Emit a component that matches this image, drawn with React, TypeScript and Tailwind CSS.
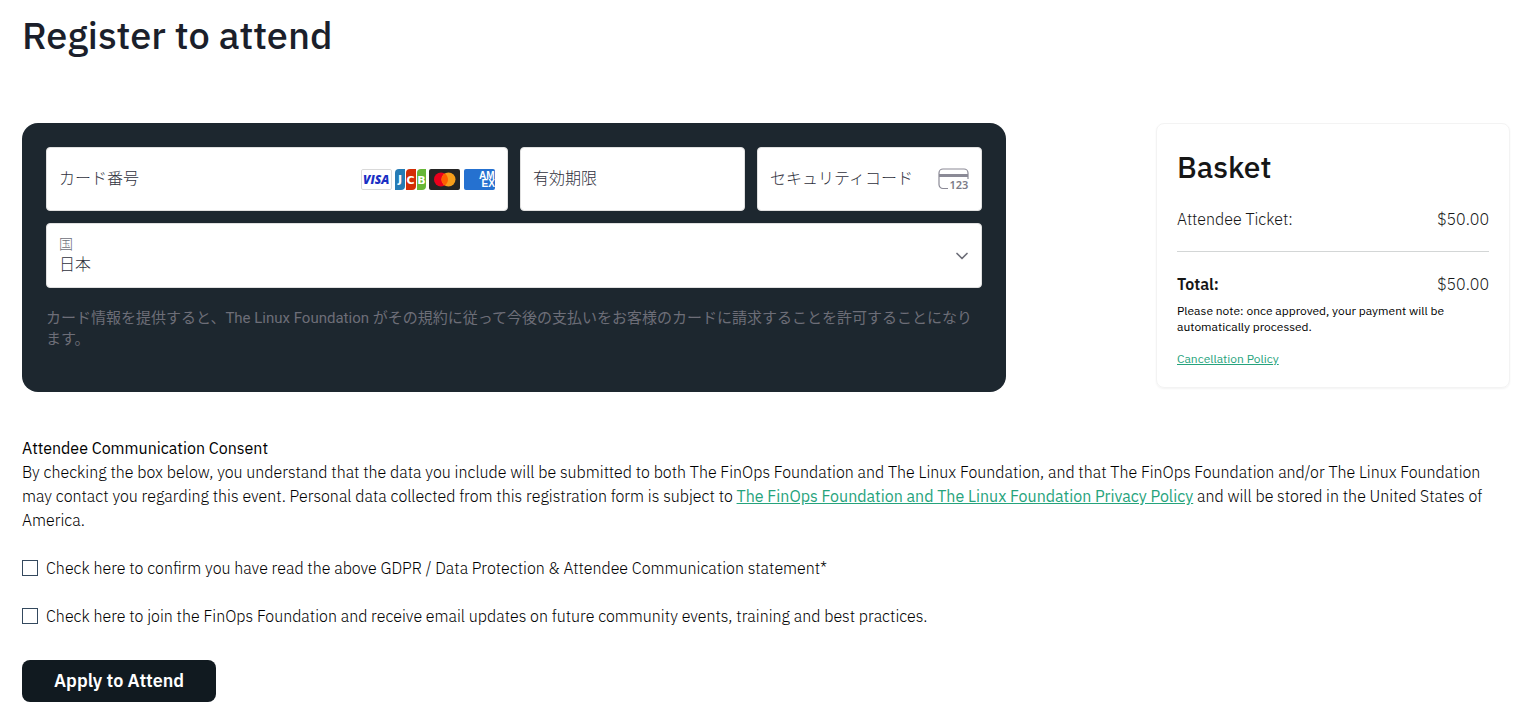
import { ChevronDown } from "lucide-react";

function VisaLogo() {
  return (
    <svg className="w-8 h-[21px]" viewBox="0 0 32 21" aria-hidden="true">
      <rect x="0.5" y="0.5" width="30" height="20" rx="1.5" fill="#fff" stroke="#d9d9d9" />
      <text x="2" y="15" fontFamily="Open Sans, sans-serif" fontSize="12" fontWeight="800" fontStyle="italic" fill="#1a2fc4">VISA</text>
    </svg>
  );
}

function JcbLogo() {
  return (
    <svg className="w-8 h-[21px]" viewBox="0 0 32 21" aria-hidden="true">
      <path d="M4 0h6v17a4 4 0 0 1-4 4H0V4a4 4 0 0 1 4-4z" fill="#257bb5" />
      <path d="M15 0h6v17a4 4 0 0 1-4 4h-6V4a4 4 0 0 1 4-4z" fill="#d42d06" />
      <path d="M26 0h5v17a4 4 0 0 1-4 4h-5V4a4 4 0 0 1 4-4z" fill="#67b637" />
      <g fontFamily="DejaVu Sans, sans-serif" fontSize="11" fontWeight="700" fill="#fff" textAnchor="middle">
        <text x="5" y="14">J</text>
        <text x="15.5" y="14.5">C</text>
        <text x="26.5" y="14.5">B</text>
      </g>
    </svg>
  );
}

function MastercardLogo() {
  return (
    <svg className="w-8 h-[21px]" viewBox="0 0 32 21" aria-hidden="true">
      <rect width="31" height="21" rx="2" fill="#252525" />
      <circle cx="12" cy="10.5" r="7" fill="#eb001b" />
      <circle cx="19.5" cy="10.5" r="7" fill="#f79e1b" />
      <path d="M15.75 4.6a7 7 0 0 1 0 11.8a7 7 0 0 1 0-11.8z" fill="#ff5f00" />
    </svg>
  );
}

function AmexLogo() {
  return (
    <svg className="w-8 h-[21px]" viewBox="0 0 32 21" aria-hidden="true">
      <rect x="1" width="31" height="21" rx="2" fill="#2571d0" />
      <g fontFamily="Liberation Sans, sans-serif" fontSize="10" fontWeight="700" fill="#fff">
        <text x="16" y="10">AM</text>
        <text x="18.5" y="18">EX</text>
      </g>
    </svg>
  );
}

function CvcIcon() {
  return (
    <svg className="w-8 h-6 shrink-0" viewBox="0 0 32 24" aria-hidden="true">
      <path d="M11 21.5H6a4 4 0 0 1-4-4V6a4 4 0 0 1 4-4h21a4 4 0 0 1 4 4V12" fill="none" stroke="#8b8a96" strokeWidth="1.2" />
      <rect x="2" y="7" width="29" height="3" fill="#8b8a96" />
      <text x="12.5" y="22" fontFamily="Noto Sans, sans-serif" fontSize="11" fontWeight="600" fill="#7c7b87">123</text>
    </svg>
  );
}

const fieldClass = "flex items-center h-16 px-3 bg-white border border-[#e0e0e0] rounded";
const inputClass = "w-full min-w-0 text-base text-[#30313d] placeholder:text-[#30313d] outline-none font-['Liberation_Sans','Noto_Sans_CJK_JP',sans-serif] font-light";

function PaymentPanel() {
  return (
    <section className="bg-[#1d272f] rounded-2xl p-6 pb-[42px]">
      <div className="grid grid-cols-4 gap-3">
        <div className={`${fieldClass} col-span-2`}>
          <input className={inputClass} type="text" aria-label="カード番号" placeholder="カード番号" />
          <div className="flex gap-[2px] shrink-0">
            <VisaLogo />
            <JcbLogo />
            <MastercardLogo />
            <AmexLogo />
          </div>
        </div>
        <div className={fieldClass}>
          <input className={inputClass} type="text" aria-label="有効期限" placeholder="有効期限" />
        </div>
        <div className={fieldClass}>
          <input className={inputClass} type="text" aria-label="セキュリティコード" placeholder="セキュリティコード" />
          <CvcIcon />
        </div>
        <div className="relative col-span-4 bg-white border border-[#e0e0e0] rounded px-3 pt-[9px] pb-[14px] font-['Noto_Sans_CJK_JP',sans-serif] font-light">
          <label htmlFor="country" className="block text-sm leading-5 text-[#6d6e78]">国</label>
          <select id="country" className="block w-full h-5 appearance-none bg-white text-base leading-5 text-[#30313d] outline-none">
            <option>日本</option>
          </select>
          <ChevronDown className="absolute right-[9px] top-[22px] w-5 h-5 text-[#6d6e78] pointer-events-none" />
        </div>
      </div>
      <p className="mt-5 text-[15px] leading-[21px] text-[#6d6e78] font-['Roboto','Noto_Sans_CJK_JP',sans-serif]">
        カード情報を提供すると、The Linux Foundation がその規約に従って今後の支払いをお客様のカードに請求することを許可することになります。
      </p>
    </section>
  );
}

function Basket() {
  return (
    <aside className="border border-[#f3f3f3] rounded-lg shadow-xs p-5 pt-[19px]">
      <h2 className="text-3xl leading-12 font-medium text-[#161616]">Basket</h2>
      <div className="flex justify-between mt-4 font-light text-[#161616]">
        <span>Attendee Ticket:</span>
        <span>$50.00</span>
      </div>
      <hr className="my-5 border-[#d3d6d6]" />
      <div className="flex justify-between font-light text-[#161616]">
        <span className="font-semibold">Total:</span>
        <span>$50.00</span>
      </div>
      <p className="mt-[7px] text-xs">Please note: once approved, your payment will be automatically processed.</p>
      <a href="#cancellation" className="block w-fit mt-4 text-xs text-[#26a37c] underline">Cancellation Policy</a>
    </aside>
  );
}

function App() {
  return (
    <main className="pl-[22px] pr-[21px] pt-[11px] pb-[18px] bg-white text-black font-['IBM_Plex_Sans','Roboto','Noto_Sans_CJK_JP',sans-serif]">
      <h1 className="text-[38px] leading-12 font-medium text-[#1b1f2b]">Register to attend</h1>
      <form className="mt-16">
        <div className="grid grid-cols-[984fr_354fr] gap-[150px] items-start">
          <PaymentPanel />
          <Basket />
        </div>
        <div className="mt-11 font-light">
          <p className="font-normal">Attendee Communication Consent</p>
          <p>
            By checking the box below, you understand that the data you include will be submitted to both The FinOps Foundation and The Linux Foundation, and that The FinOps Foundation and/or The Linux Foundation may contact you regarding this event. Personal data collected from this registration form is subject to <a href="#privacy" className="font-normal text-[#26a37c] underline">The FinOps Foundation and The Linux Foundation Privacy Policy</a> and will be stored in the United States of America.
          </p>
          <label className="flex items-center gap-2 mt-6">
            <input type="checkbox" className="appearance-none w-4 h-4 border border-[#34495e] checked:bg-[#34495e]" />
            Check here to confirm you have read the above GDPR / Data Protection &amp; Attendee Communication statement*
          </label>
          <label className="flex items-center gap-2 mt-6">
            <input type="checkbox" className="appearance-none w-4 h-4 border border-[#34495e] checked:bg-[#34495e]" />
            Check here to join the FinOps Foundation and receive email updates on future community events, training and best practices.
          </label>
        </div>
        <button type="submit" className="mt-8 h-[42px] px-8 rounded-lg bg-[#111a20] text-white text-lg font-semibold">Apply to Attend</button>
      </form>
    </main>
  );
}

export default App;
